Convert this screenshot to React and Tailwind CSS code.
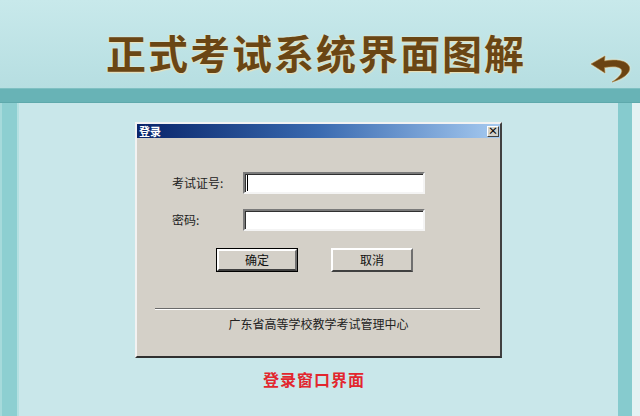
import React from "react";

const cjk = "font-['Noto_Sans_CJK_SC','Noto_Sans',sans-serif]";

function BackArrow() {
  return (
    <svg width="42" height="30" viewBox="0 0 42 30" className="drop-shadow-[0_0_1px_#f6eed2]">
      <path
        d="M1 11 L15 3 L14.5 8 C25 6 37 7 39.5 14 C41 20 33 26 22 29 C30 24 33.5 19 31 16 C28 13 21 13.5 14.5 14.5 L15 20 Z"
        fill="#6b4312"
        stroke="#a67c3a"
        strokeWidth="0.6"
      />
    </svg>
  );
}

function RaisedButton({ label, isDefault }) {
  return (
    <div className={isDefault ? "border border-black" : ""}>
      <div
        className={
          "flex items-center justify-center bg-[#d4d0c8] border-2 border-t-white border-l-white border-r-[#6f6f6f] border-b-[#404040] text-[12px] text-[#111] " +
          (isDefault ? "w-[80px] h-[22px]" : "w-[82px] h-[24px]")
        }
      >
        {label}
      </div>
    </div>
  );
}

function TextField({ caret }) {
  return (
    <div className="h-[22px] w-[182px] bg-white border-2 border-t-[#7a7a7a] border-l-[#7a7a7a] border-r-[#f4f4f4] border-b-[#f4f4f4] shadow-[inset_1px_1px_0_#303030] flex items-center pl-[2px]">
      {caret && <div className="w-px h-[16px] bg-black" />}
    </div>
  );
}

function LoginDialog() {
  return (
    <div className={"w-[367px] h-[236px] bg-[#d4d0c8] border-2 border-t-[#f2f2f2] border-l-[#f2f2f2] border-r-[#404040] border-b-[#303030] flex flex-col " + cjk}>
      <div className="h-[14px] bg-gradient-to-r from-[#0a246a] via-[#3a6ab0] to-[#a6caf0] flex items-center justify-between pl-[2px] pr-[1px]">
        <span className="text-white text-[11px] font-bold leading-none">登录</span>
        <div className="w-[12px] h-[11px] bg-[#d4d0c8] border border-t-white border-l-white border-r-[#404040] border-b-[#404040] flex items-center justify-center text-[10px] font-bold leading-none text-black">
          ×
        </div>
      </div>

      <div className="mt-[34px] ml-[35px] grid grid-cols-[71px_182px] gap-y-[15px] items-center text-[12px] text-[#222]">
        <span>考试证号:</span>
        <TextField caret />
        <span>密码:</span>
        <TextField />
      </div>

      <div className="mt-[17px] ml-[79px] flex items-start gap-[33px]">
        <RaisedButton label="确定" isDefault />
        <RaisedButton label="取消" />
      </div>

      <div className="mt-[36px] ml-[18px] w-[325px] border-t border-t-[#6a6a6a] border-b border-b-white" />

      <div className="mt-[6px] text-center text-[12px] leading-[16px] text-[#222]">
        广东省高等学校教学考试管理中心
      </div>
    </div>
  );
}

export default function App() {
  return (
    <div className="w-[640px] h-[416px] overflow-hidden flex flex-col bg-[#c9e7ea]">
      <div className="h-[88px] shrink-0 bg-gradient-to-b from-[#c8e9eb] to-[#b6dee1] flex items-end">
        <h1
          className={"ml-[106px] mb-[16px] text-[40px] leading-none font-bold tracking-[2px] text-[#6a4614] [text-shadow:0_0_2px_#f4ecc8,1px_1px_1px_#e8dcb0] " + cjk}
        >
          正式考试系统界面图解
        </h1>
        <div className="ml-auto mr-[8px] mb-[5px]">
          <BackArrow />
        </div>
      </div>

      <div className="h-[15px] shrink-0 bg-[#68b3b6] border-t border-t-[#7fc0c2] border-b border-b-[#5ea9ac]" />

      <div className="flex flex-1">
        <div className="w-[19px] bg-[#8dcfd1] border-l-2 border-l-[#a6dadb] border-r-2 border-r-[#b4e0e1]" />
        <div className="flex-1 flex flex-col items-center pt-[19px]">
          <LoginDialog />
          <div className={"mt-[9px] -ml-[9px] text-[16px] font-bold text-[#e2262e] tracking-[1px] " + cjk}>
            登录窗口界面
          </div>
        </div>
        <div className="w-[14px] bg-[#86cbce]" />
        <div className="w-[8px] bg-[#e4f2f3]" />
      </div>
    </div>
  );
}
